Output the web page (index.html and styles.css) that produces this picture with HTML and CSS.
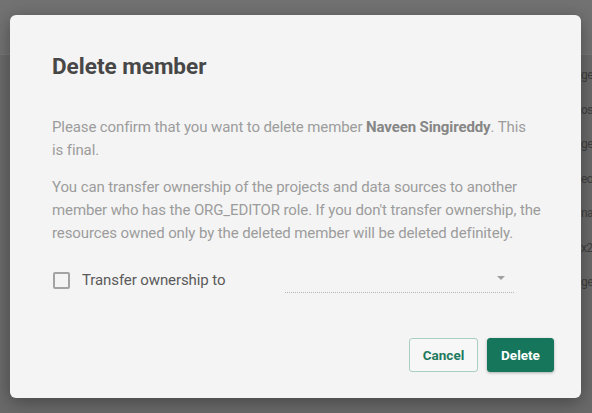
FILE: index.html
```html
<!DOCTYPE html>
<html>
<head>
<meta charset="utf-8">
<link rel="stylesheet" href="styles.css">
</head>
<body>
<div class="page">
  <div class="page-header"></div>
  <div class="page-list">
    <div class="page-row">ge</div>
    <div class="page-row">os</div>
    <div class="page-row">ge</div>
    <div class="page-row">eo</div>
    <div class="page-row">na</div>
    <div class="page-row">x2</div>
    <div class="page-row">ge</div>
  </div>
</div>
<div class="dialog">
  <h1 class="title">Delete member</h1>
  <p class="text first">Please confirm that you want to delete member <strong>Naveen Singireddy</strong>. This is final.</p>
  <p class="text">You can transfer ownership of the projects and data sources to another member who has the ORG_EDITOR role. If you don't transfer ownership, the resources owned only by the deleted member will be deleted definitely.</p>
  <div class="transfer">
    <label class="check"><span class="box"></span><span class="label">Transfer ownership to</span></label>
    <div class="select"><span class="caret"></span></div>
  </div>
  <div class="footer">
    <button class="btn cancel">Cancel</button>
    <button class="btn delete">Delete</button>
  </div>
</div>
</body>
</html>
```
FILE: styles.css
```css
* { box-sizing: border-box; }
html, body { margin: 0; padding: 0; }
body {
  width: 592px;
  height: 413px;
  overflow: hidden;
  background: #6a6a6a;
  font-family: Roboto, "Liberation Sans", sans-serif;
  position: relative;
}
.page { height: 100%; }
.page-header {
  height: 55px;
  background: #727272;
  border-bottom: 1px solid #777;
}
.page-list {
  padding: 10px 0 0 581px;
}
.page-row {
  height: 34.5px;
  line-height: 20px;
  font-size: 12px;
  letter-spacing: -0.6px;
  color: #404040;
  white-space: nowrap;
}
.dialog {
  position: absolute;
  left: 10px;
  top: 15px;
  width: 571px;
  height: 383px;
  background: #f4f4f4;
  border-radius: 6px;
  box-shadow: 0 4px 18px rgba(0,0,0,0.35);
  padding: 38px 27px 26px 42px;
  display: flex;
  flex-direction: column;
}
.title {
  margin: 0;
  font-size: 22.5px;
  line-height: 26px;
  font-weight: 700;
  color: #474747;
}
.text {
  margin: 14px 0 0;
  font-size: 15px;
  line-height: 23px;
  letter-spacing: -0.11px;
  color: #9c9c9c;
}
.text.first { margin-top: 37px; padding-right: 20px; }
.text strong { color: #868686; font-weight: 700; }
.transfer {
  margin-top: 22px;
  display: flex;
  align-items: center;
  height: 26px;
}
.check {
  display: flex;
  align-items: center;
  width: 233px;
}
.box {
  width: 17px;
  height: 17px;
  border: 2px solid #a3a3a3;
  border-radius: 2px;
  margin-left: 1px;
  margin-right: 12px;
}
.label {
  font-size: 15px;
  letter-spacing: -0.1px;
  color: #5a5a5a;
}
.select {
  width: 229px;
  height: 26px;
  border-bottom: 1px dotted #b5b5b5;
  display: flex;
  justify-content: flex-end;
  align-items: center;
  padding-right: 9px;
}
.caret {
  width: 0;
  height: 0;
  border-left: 4px solid transparent;
  border-right: 4px solid transparent;
  border-top: 4px solid #a0a0a0;
  margin-top: -3px;
}
.footer {
  margin-top: auto;
  display: flex;
  justify-content: flex-end;
  gap: 9px;
}
.btn {
  height: 34px;
  border-radius: 3px;
  font-family: Roboto, "Liberation Sans", sans-serif;
  font-size: 13.5px;
  font-weight: 700;
  padding: 0;
  cursor: pointer;
}
.cancel {
  width: 69px;
  background: #f7f7f7;
  border: 1px solid #a9cfc2;
  color: #1e7a5e;
}
.delete {
  width: 67px;
  background: #16765b;
  border: 1px solid #16765b;
  color: #fff;
  box-shadow: 0 1px 3px rgba(0,0,0,0.3);
}
```
